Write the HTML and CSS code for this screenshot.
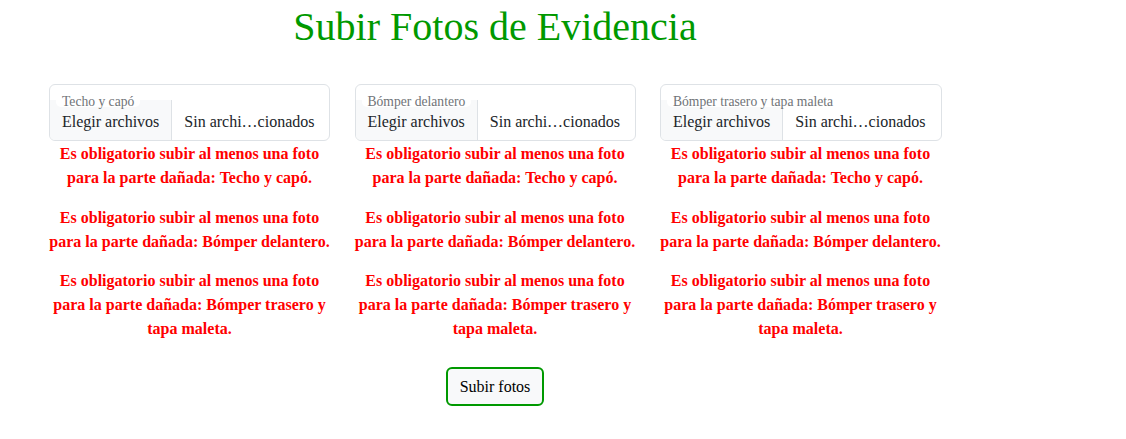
FILE: index.html
```html
<!DOCTYPE html>
<html lang="es">
<head>
<meta charset="utf-8">
<title>Subir Fotos de Evidencia</title>
<link rel="stylesheet" href="styles.css">
</head>
<body>
<div class="wrap">
  <h1 class="title">Subir Fotos de Evidencia</h1>
  <div class="cols">
    <div class="col">
      <div class="field">
        <div class="row">
          <span class="btn-file">Elegir archivos</span>
          <span class="file-name">Sin archi…cionados</span>
        </div>
        <span class="label">Techo y capó</span>
      </div>
      <p class="err">Es obligatorio subir al menos una foto para la parte dañada: Techo y capó.</p>
      <p class="err">Es obligatorio subir al menos una foto para la parte dañada: Bómper delantero.</p>
      <p class="err">Es obligatorio subir al menos una foto para la parte dañada: Bómper trasero y tapa maleta.</p>
    </div>
    <div class="col">
      <div class="field">
        <div class="row">
          <span class="btn-file">Elegir archivos</span>
          <span class="file-name">Sin archi…cionados</span>
        </div>
        <span class="label">Bómper delantero</span>
      </div>
      <p class="err">Es obligatorio subir al menos una foto para la parte dañada: Techo y capó.</p>
      <p class="err">Es obligatorio subir al menos una foto para la parte dañada: Bómper delantero.</p>
      <p class="err">Es obligatorio subir al menos una foto para la parte dañada: Bómper trasero y tapa maleta.</p>
    </div>
    <div class="col">
      <div class="field">
        <div class="row">
          <span class="btn-file">Elegir archivos</span>
          <span class="file-name">Sin archi…cionados</span>
        </div>
        <span class="label">Bómper trasero y tapa maleta</span>
      </div>
      <p class="err">Es obligatorio subir al menos una foto para la parte dañada: Techo y capó.</p>
      <p class="err">Es obligatorio subir al menos una foto para la parte dañada: Bómper delantero.</p>
      <p class="err">Es obligatorio subir al menos una foto para la parte dañada: Bómper trasero y tapa maleta.</p>
    </div>
  </div>
  <div class="actions">
    <button class="submit" type="button">Subir fotos</button>
  </div>
</div>
</body>
</html>
```
FILE: styles.css
```css
html, body {
  margin: 0;
  padding: 0;
  background: #ffffff;
}
body {
  font-family: "Liberation Serif", "Times New Roman", serif;
  color: #212529;
}
.wrap {
  width: 892px;
  margin-left: 49px;
  padding-top: 4px;
}
.title {
  margin: 0;
  font-size: 40px;
  font-weight: normal;
  line-height: 45px;
  color: #009900;
  text-align: center;
}
.cols {
  display: grid;
  grid-template-columns: 281px 281px 281px;
  column-gap: 24.5px;
  margin-top: 35px;
}
.col:last-child .field {
  width: 282px;
}
.field {
  position: relative;
  height: 57px;
  box-sizing: border-box;
  border: 1px solid #dee2e6;
  border-radius: 6px;
  display: flex;
  flex-direction: column;
  justify-content: flex-end;
  overflow: hidden;
}
.row {
  display: flex;
  align-items: stretch;
  height: 40px;
  font-size: 16px;
}
.btn-file {
  background: #f8f9fa;
  border-right: 1px solid #dee2e6;
  padding: 10px 12px 6px 12px;
  line-height: 24px;
  color: #212529;
}
.file-name {
  padding: 10px 12px 6px 12px;
  line-height: 24px;
  color: #212529;
}
.label {
  position: absolute;
  left: 6px;
  top: 0;
  box-sizing: border-box;
  height: 22px;
  padding: 9px 6px 0 6px;
  background: #ffffff;
  border-radius: 0 0 5px 5px;
  font-size: 13.6px;
  line-height: 16px;
  color: #6f7377;
}
.err {
  margin: 1px 0 15.5px 0;
  font-size: 16px;
  font-weight: bold;
  line-height: 24px;
  color: #ff0000;
  text-align: center;
}
.err + .err {
  margin-top: 0;
}
.actions {
  display: flex;
  justify-content: center;
  padding-top: 10.5px;
}
.submit {
  font-family: "Liberation Serif", "Times New Roman", serif;
  font-size: 16px;
  line-height: 23px;
  padding: 6px 12px;
  border: 2px solid #009900;
  border-radius: 6px;
  background: #f8f9fa;
  color: #000000;
}
```
